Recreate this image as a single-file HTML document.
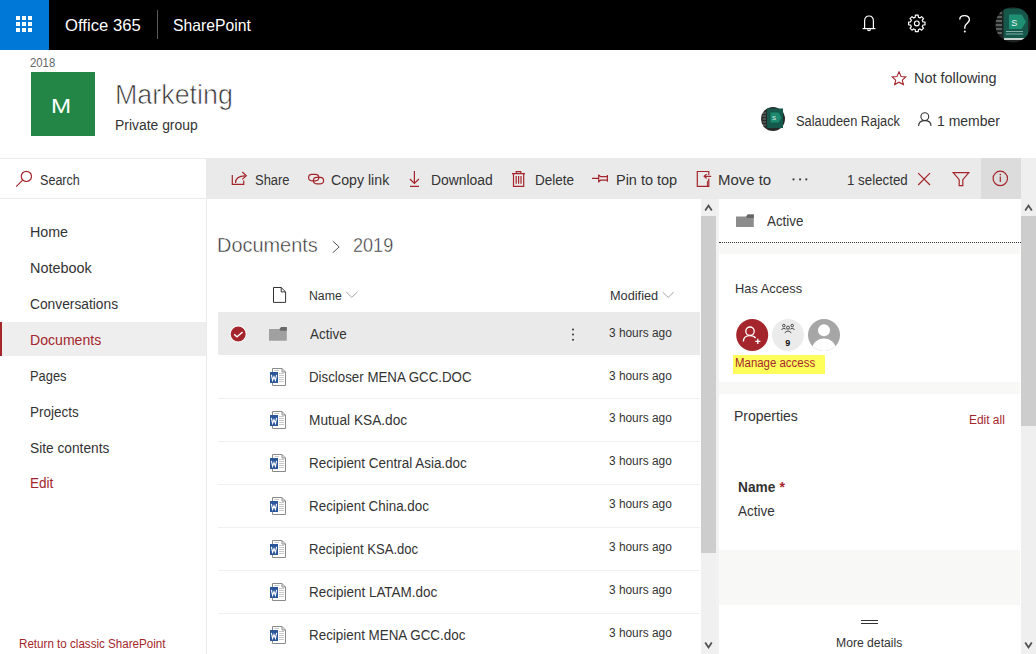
<!DOCTYPE html>
<html><head><meta charset="utf-8">
<style>
*{margin:0;padding:0;box-sizing:border-box}
html,body{width:1036px;height:654px;overflow:hidden;background:#fff;font-family:"Liberation Sans",sans-serif;color:#333}
.a{position:absolute}
.t{position:absolute;line-height:1;white-space:nowrap;transform-origin:0 0}
svg{position:absolute;overflow:visible}
.ln{position:absolute;height:1px;background:#f0f0f0}
</style></head><body>

<!-- Suite bar -->
<div class="a" style="left:0;top:0;width:1036px;height:50px;background:#000"></div>
<div class="a" style="left:0;top:0;width:49px;height:50px;background:#0078d7"></div>
<svg style="left:0;top:0" width="49" height="50">
 <g fill="#fff">
  <rect x="16" y="16" width="4" height="4"/><rect x="22" y="16" width="4" height="4"/><rect x="28" y="16" width="4" height="4"/>
  <rect x="16" y="22" width="4" height="4"/><rect x="22" y="22" width="4" height="4"/><rect x="28" y="22" width="4" height="4"/>
  <rect x="16" y="28" width="4" height="4"/><rect x="22" y="28" width="4" height="4"/><rect x="28" y="28" width="4" height="4"/>
 </g>
</svg>
<div class="a" style="left:157px;top:10px;width:1px;height:29px;background:#5a5a5a"></div>

<!-- suite bar icons -->
<svg style="left:0;top:0" width="1036" height="50">
 <g fill="none" stroke="#fff" stroke-width="1.2">
  <!-- bell -->
  <path d="M864.6 28.2 L864.6 21.2 C864.6 17.8 866.6 16 869 16 C871.4 16 873.4 17.8 873.4 21.2 L873.4 28.2"/>
  <path d="M862.6 28.6 L875.4 28.6"/>
  <path d="M867.6 29.2 C867.6 31 870.4 31 870.4 29.2"/>
  <!-- gear -->
  <circle cx="916.8" cy="23.4" r="2.4"/>
  <path d="M914.39 17.58 L915.18 17.31 L915.40 15.22 L918.20 15.22 L918.42 17.31 L919.21 17.58 L919.96 17.95 L921.59 16.62 L923.58 18.61 L922.25 20.24 L922.62 20.99 L922.89 21.78 L924.98 22.00 L924.98 24.80 L922.89 25.02 L922.62 25.81 L922.25 26.56 L923.58 28.19 L921.59 30.18 L919.96 28.85 L919.21 29.22 L918.42 29.49 L918.20 31.58 L915.40 31.58 L915.18 29.49 L914.39 29.22 L913.64 28.85 L912.01 30.18 L910.02 28.19 L911.35 26.56 L910.98 25.81 L910.71 25.02 L908.62 24.80 L908.62 22.00 L910.71 21.78 L910.98 20.99 L911.35 20.24 L910.02 18.61 L912.01 16.62 L913.64 17.95 Z" stroke-linejoin="round"/>
  <!-- ? -->
  <path d="M959.8 19.4 C959.8 16.8 961.8 15.6 964.4 15.6 C967.2 15.6 969.4 17.2 969.4 19.8 C969.4 23 964.8 23.6 964.8 27.2 L964.8 28.8" stroke-width="1.4"/>
 </g>
 <circle cx="964.8" cy="31.5" r="1" fill="#fff"/>
 <!-- avatar -->
 <defs><clipPath id="bigav"><circle cx="1013" cy="24.8" r="17.6"/></clipPath></defs>
 <g clip-path="url(#bigav)">
 <rect x="994" y="6" width="38" height="38" fill="#1e2221"/>
 <rect x="1003.5" y="8.5" width="24.5" height="29.5" fill="#15574b"/>
 <path d="M1009 14.5 L1021.5 14.5 L1026 21.8 L1021.5 29 L1009 29 Z" fill="#1f8f73"/>
 <rect x="1004" y="38" width="23" height="2" fill="#c9d2cf"/>
 <g stroke="#9aa09e" stroke-width="1.2"><path d="M997 13 h5 M996 17 h6 M995.5 21 h6.5 M995.5 25 h6.5 M996 29 h6 M997 33 h5"/></g>
 <path d="M1006 31.5 h17 M1006 34 h17" stroke="#9fc8bc" stroke-width="0.8"/>
 </g>
 <text x="1011.2" y="25.5" font-family="Liberation Sans" font-size="9" fill="#eef6f3">S</text>
</svg>

<!-- Site header icons -->
<svg style="left:0;top:0" width="1036" height="160">
 <path d="M899 71.8 L901.1 76.6 L905.8 77 L902.3 80.2 L903.4 84.6 L899 82.2 L894.6 84.6 L895.7 80.2 L892.2 77 L896.9 76.6 Z" fill="none" stroke="#a4262c" stroke-width="1.1" stroke-linejoin="miter"/>
 <!-- small avatar -->
 <circle cx="773" cy="119" r="12" fill="#262a29"/>
 <rect x="767" y="108.5" width="16" height="19.5" fill="#14594c"/>
 <path d="M770.5 112.5 L778.5 112.5 L781.5 117.5 L778.5 122.5 L770.5 122.5 Z" fill="#1d8a6f"/>
 <text x="772" y="120" font-family="Liberation Sans" font-size="6" fill="#e8f4ef">S</text>
 <g stroke="#8a8f8e" stroke-width="0.8"><path d="M763 113 h3 M762.5 116 h3.5 M762.5 119 h3.5 M762.5 122 h3.5 M763 125 h3"/></g>
 <!-- person -->
 <g fill="none" stroke="#333" stroke-width="1.1">
  <circle cx="924.8" cy="116.6" r="3.9"/>
  <path d="M918.6 126 C918.6 122.5 921.2 120.6 924.8 120.6 C928.4 120.6 931 122.5 931 126"/>
 </g>
</svg>

<!-- Site header blocks -->
<div class="a" style="left:31px;top:72px;width:64px;height:64px;background:#238646"></div>
<div class="a" style="left:0;top:158px;width:1036px;height:1px;background:#eaeaea"></div>

<!-- Left nav -->
<div class="a" style="left:206px;top:158px;width:1px;height:496px;background:#eaeaea"></div>
<div class="a" style="left:0;top:198px;width:206px;height:1px;background:#eaeaea"></div>
<svg style="left:0;top:0" width="206" height="200">
 <g fill="none" stroke="#a4262c" stroke-width="1.2">
  <circle cx="26.4" cy="176.4" r="5.1"/>
  <path d="M22.6 180.2 L16.2 186.6"/>
 </g>
</svg>
<div class="a" style="left:0;top:322px;width:206px;height:34px;background:#eeeeee"></div>
<div class="a" style="left:0;top:322px;width:2px;height:34px;background:#a4262c"></div>

<!-- Toolbar -->
<div class="a" style="left:207px;top:158px;width:829px;height:41px;background:#eaeaea"></div>
<div class="a" style="left:981px;top:158px;width:40px;height:41px;background:#dcdcdc"></div>
<svg style="left:0;top:0" width="1036" height="200">
 <g fill="none" stroke="#a4262c" stroke-width="1.2">
  <!-- share -->
  <path d="M232.3 175 L232.3 184.4 L243.7 184.4 L243.7 180.5"/>
  <path d="M235.5 183 C235.5 178.5 238.5 175.8 245 175.8"/>
  <path d="M242.3 172 L246.3 175.8 L242.3 179.4"/>
  <!-- copy link -->
  <rect x="308.6" y="174.4" width="10.2" height="6.4" rx="3.2"/>
  <rect x="313.4" y="177.4" width="10.2" height="6.4" rx="3.2"/>
  <!-- download -->
  <path d="M414.4 171 L414.4 183.5 M409.9 179 L414.4 183.5 L418.9 179 M410 186.4 L419 186.4"/>
  <!-- trash -->
  <path d="M512 173.6 L525 173.6 M516.2 173.6 L516.2 171.6 L520.8 171.6 L520.8 173.6 M513.5 173.6 L513.5 186.4 L523.7 186.4 L523.7 173.6 M516.2 176 L516.2 183.8 M518.6 176 L518.6 183.8 M521 176 L521 183.8"/>
  <!-- pin -->
  <path d="M592 178.4 L598.7 178.4 M598.7 174.4 L598.7 182.4 M598.7 175 L600.6 176.6 L607.4 176.6 M598.7 181.8 L600.6 180.2 L607.4 180.2 M607.4 174.9 L607.4 181.8"/>
  <!-- move to -->
  <path d="M708.8 175 L708.8 171.5 L697.3 171.5 L697.3 186.4 L708.8 186.4 L708.8 178.6"/>
  <path d="M711.2 176.3 L704.4 176.3 M706.6 174.1 L704.2 176.3 L706.6 178.5"/>
  <path d="M707.4 186.4 L707.4 181.2 L708.8 179.8" stroke-width="1"/>
  <!-- X -->
  <path d="M918.2 173.2 L930 185 M930 173.2 L918.2 185"/>
  <!-- filter -->
  <path d="M953.2 172.6 L968.8 172.6 L962.8 179.6 L962.8 185.6 L959.2 185.6 L959.2 179.6 Z" stroke-linejoin="miter"/>
  <!-- info -->
  <circle cx="1000.3" cy="178.4" r="7.2"/>
  <path d="M1000.3 176.6 L1000.3 182"/>
 </g>
 <circle cx="1000.3" cy="174.6" r="0.8" fill="#a4262c"/>
 <g fill="#444"><circle cx="793.5" cy="179.4" r="1.1"/><circle cx="800.1" cy="179.4" r="1.1"/><circle cx="806.3" cy="179.4" r="1.1"/></g>
</svg>

<!-- Content -->
<svg style="left:0;top:0" width="700" height="654">
 <path d="M332.8 241.2 L339.2 246.9 L332.8 252.7" fill="none" stroke="#555" stroke-width="1"/>
 <!-- header file icon -->
 <path d="M273.5 287.5 L281.2 287.5 L285.6 291.9 L285.6 302.4 L273.5 302.4 Z M281.2 287.5 L281.2 291.9 L285.6 291.9" fill="none" stroke="#333" stroke-width="1"/>
 <path d="M346.2 292 L351.8 297.4 L357.4 292" fill="none" stroke="#a6a6a6" stroke-width="1"/>
 <path d="M662.6 292 L668.2 297.4 L673.8 292" fill="none" stroke="#a6a6a6" stroke-width="1"/>
</svg>

<div class="a" style="left:218px;top:312px;width:482px;height:43px;background:#eaeaea"></div>
<div class="ln" style="left:218px;top:398px;width:482px"></div>
<div class="ln" style="left:218px;top:441px;width:482px"></div>
<div class="ln" style="left:218px;top:484px;width:482px"></div>
<div class="ln" style="left:218px;top:527px;width:482px"></div>
<div class="ln" style="left:218px;top:570px;width:482px"></div>
<div class="ln" style="left:218px;top:613px;width:482px"></div>

<svg style="left:0;top:0" width="700" height="654">
 <defs>
  <g id="wd">
   <path d="M2.5 0.5 L12 0.5 L15.5 4 L15.5 17.5 L2.5 17.5 Z" fill="#fff" stroke="#8a8a8a" stroke-width="1"/>
   <path d="M12 0.5 L12 4 L15.5 4" fill="none" stroke="#8a8a8a" stroke-width="1"/>
   <g stroke="#c8c8c8" stroke-width="1"><path d="M4.5 2.5 H9 M9 5.5 H14 M9 7.5 H14 M9 9.5 H14 M9 11.5 H14 M9 13.5 H14"/></g>
   <rect x="0" y="4" width="8" height="11" fill="#2b579a"/>
   <path d="M1.4 6.8 L2.6 12.4 L4 8.6 L5.4 12.4 L6.6 6.8" fill="none" stroke="#fff" stroke-width="1.1"/>
  </g>
 </defs>
 <!-- check -->
 <circle cx="238.2" cy="334" r="8.4" fill="#fff"/>
 <circle cx="238.2" cy="334" r="7.5" fill="#a4262c"/>
 <path d="M234.2 334.4 L237 336.8 L242.6 332" fill="none" stroke="#fff" stroke-width="1.4"/>
 <!-- folder -->
 <path d="M269 329 L279.5 329 L281 327 L286.8 327 L286.8 340.8 L269 340.8 Z" fill="#a0a0a0"/>
 <path d="M279.5 329.2 L281.2 327 L286.8 327 L286.8 330.8 L280.5 330.8 Z" fill="#6a6a6a"/>
 <!-- kebab -->
 <g fill="#333"><circle cx="573" cy="329.5" r="1"/><circle cx="573" cy="334.6" r="1"/><circle cx="573" cy="339.7" r="1"/></g>
 <use href="#wd" x="270" y="368"/>
 <use href="#wd" x="270" y="411"/>
 <use href="#wd" x="270" y="454"/>
 <use href="#wd" x="270" y="497"/>
 <use href="#wd" x="270" y="540"/>
 <use href="#wd" x="270" y="583"/>
 <use href="#wd" x="270" y="626"/>
</svg>

<!-- Left scrollbar -->
<div class="a" style="left:701px;top:199px;width:16px;height:455px;background:#f0f0f0"></div>
<div class="a" style="left:701px;top:216px;width:15px;height:337px;background:#cdcdcd"></div>
<div class="a" style="left:716px;top:199px;width:3px;height:455px;background:#f2f2f2"></div>
<svg style="left:0;top:0" width="1036" height="654">
 <g fill="none" stroke="#505050" stroke-width="1.8">
  <path d="M705.2 210.4 L708.5 205.6 L711.8 210.4"/>
  <path d="M705.2 642.6 L708.5 647.4 L711.8 642.6"/>
  <path d="M1025.2 210.4 L1028.5 205.6 L1031.8 210.4"/>
  <path d="M1025.2 642.6 L1028.5 647.4 L1031.8 642.6"/>
 </g>
</svg>

<!-- Panel -->
<svg style="left:0;top:0" width="1036" height="654">
 <path d="M736 216.6 L746 216.6 L747.5 214.6 L753.8 214.6 L753.8 227 L736 227 Z" fill="#8c8c8c"/>
 <path d="M746.2 216.8 L747.8 214.6 L753.8 214.6 L753.8 218 L747 218 Z" fill="#666"/>
</svg>
<div class="a" style="left:719px;top:242px;width:302px;height:1px;border-top:1px dotted #333"></div>
<div class="a" style="left:719px;top:243px;width:301px;height:11px;background:#f8f8f6"></div>

<svg style="left:0;top:0" width="1036" height="654">
 <defs><clipPath id="av"><circle cx="824" cy="335" r="16"/></clipPath></defs>
 <circle cx="752.2" cy="335" r="16" fill="#a4262c"/>
 <g fill="none" stroke="#fff" stroke-width="1.3">
  <circle cx="750" cy="331.2" r="4.2"/>
  <path d="M743.4 341.6 C743.4 337.6 746.4 335.6 750 335.6 C752.5 335.6 754.5 336.5 755.6 338"/>
  <path d="M757.8 338.8 L757.8 344 M755.2 341.4 L760.4 341.4"/>
 </g>
 <circle cx="788" cy="335" r="16" fill="#ebebeb"/>
 <g fill="none" stroke="#333" stroke-width="0.9">
  <circle cx="783.8" cy="325.6" r="1.3"/><circle cx="792.2" cy="325.6" r="1.3"/><circle cx="788" cy="327.6" r="1.5"/>
  <path d="M781.6 330 C782 328 785.6 328 786 329.6 M794.4 330 C794 328 790.4 328 790 329.6 M785 333.2 C785.3 330.4 790.7 330.4 791 333.2"/>
 </g>
 <text x="785.2" y="346" font-family="Liberation Sans" font-size="9" font-weight="bold" fill="#111">9</text>
 <circle cx="824" cy="335" r="16" fill="#a6a6a6"/>
 <g clip-path="url(#av)" fill="#fff">
  <circle cx="824" cy="330.2" r="6"/>
  <ellipse cx="824" cy="350" rx="12" ry="11.5"/>
 </g>
</svg>
<div class="a" style="left:733px;top:355px;width:92px;height:19px;background:#ffff5c"></div>
<div class="a" style="left:719px;top:382px;width:301px;height:12px;background:#f8f8f6"></div>
<div class="a" style="left:719px;top:550px;width:301px;height:55px;background:#f8f8f6"></div>
<div class="a" style="left:861px;top:620px;width:17px;height:1px;background:#333"></div>
<div class="a" style="left:861px;top:623px;width:17px;height:1px;background:#333"></div>

<!-- Right scrollbar -->
<div class="a" style="left:1021px;top:158px;width:15px;height:496px;background:#efefef"></div>
<div class="a" style="left:1021px;top:216px;width:15px;height:210px;background:#cdcdcd"></div>
<svg style="left:0;top:0" width="1036" height="654">
 <g fill="none" stroke="#505050" stroke-width="1.8">
  <path d="M1025.2 210.4 L1028.5 205.6 L1031.8 210.4"/>
  <path d="M1025.2 642.6 L1028.5 647.4 L1031.8 642.6"/>
 </g>
</svg>

<div class="t" style="left:65.29px;top:17.00px;font-size:16.5px;color:#ffffff;transform:scaleX(1.011)">Office 365</div>
<div class="t" style="left:172.85px;top:17.00px;font-size:16.5px;color:#ffffff;transform:scaleX(0.953)">SharePoint</div>
<div class="t" style="left:30.09px;top:57.00px;font-size:12.5px;color:#666666;transform:scaleX(0.908)">2018</div>
<div class="t" style="left:51.00px;top:95.00px;font-size:21px;color:#ffffff;transform:scaleX(1.150)">M</div>
<div class="t" style="left:114.98px;top:81.00px;font-size:28px;color:#333333;-webkit-text-stroke:0.7px #fff;transform:scaleX(0.959)">Marketing</div>
<div class="t" style="left:115.01px;top:118.00px;font-size:14px;color:#333333;transform:scaleX(0.993)">Private group</div>
<div class="t" style="left:913.77px;top:71.00px;font-size:14px;color:#333333;transform:scaleX(1.031)">Not following</div>
<div class="t" style="left:796.48px;top:113.50px;font-size:14px;color:#333333;transform:scaleX(0.915)">Salaudeen Rajack</div>
<div class="t" style="left:937.00px;top:113.50px;font-size:14px;color:#333333">1 member</div>
<div class="t" style="left:39.60px;top:173.00px;font-size:14px;color:#333333;transform:scaleX(0.898)">Search</div>
<div class="t" style="left:30.18px;top:225.00px;font-size:14px;color:#333333;transform:scaleX(1.019)">Home</div>
<div class="t" style="left:29.97px;top:261.00px;font-size:14px;color:#333333;transform:scaleX(1.029)">Notebook</div>
<div class="t" style="left:30.02px;top:297.00px;font-size:14px;color:#333333;transform:scaleX(0.984)">Conversations</div>
<div class="t" style="left:29.99px;top:333.30px;font-size:14px;color:#a4262c;transform:scaleX(1.006)">Documents</div>
<div class="t" style="left:30.08px;top:369.00px;font-size:14px;color:#333333;transform:scaleX(0.921)">Pages</div>
<div class="t" style="left:30.04px;top:404.70px;font-size:14px;color:#333333;transform:scaleX(0.963)">Projects</div>
<div class="t" style="left:30.02px;top:440.60px;font-size:14px;color:#333333;transform:scaleX(0.980)">Site contents</div>
<div class="t" style="left:30.03px;top:476.30px;font-size:14px;color:#a4262c;transform:scaleX(0.965)">Edit</div>
<div class="t" style="left:18.53px;top:638.00px;font-size:12px;color:#a4262c;transform:scaleX(0.968)">Return to classic SharePoint</div>
<div class="t" style="left:255.38px;top:173.00px;font-size:14px;color:#333333;transform:scaleX(0.925)">Share</div>
<div class="t" style="left:330.99px;top:173.00px;font-size:14px;color:#333333;transform:scaleX(1.011)">Copy link</div>
<div class="t" style="left:430.91px;top:173.00px;font-size:14px;color:#333333;transform:scaleX(0.992)">Download</div>
<div class="t" style="left:535.03px;top:173.00px;font-size:14px;color:#333333;transform:scaleX(0.967)">Delete</div>
<div class="t" style="left:615.57px;top:173.00px;font-size:14px;color:#333333;transform:scaleX(1.033)">Pin to top</div>
<div class="t" style="left:718.23px;top:173.00px;font-size:14px;color:#333333;transform:scaleX(1.067)">Move to</div>
<div class="t" style="left:847.05px;top:173.00px;font-size:14px;color:#333333;transform:scaleX(0.952)">1 selected</div>
<div class="t" style="left:216.90px;top:234.00px;font-size:21px;color:#333333;-webkit-text-stroke:0.45px #fff;transform:scaleX(0.949)">Documents</div>
<div class="t" style="left:353.44px;top:234.00px;font-size:21px;color:#333333;-webkit-text-stroke:0.45px #fff;transform:scaleX(0.860)">2019</div>
<div class="t" style="left:309.28px;top:290.20px;font-size:12px;color:#333333;transform:scaleX(1.023)">Name</div>
<div class="t" style="left:609.54px;top:289.80px;font-size:12px;color:#333333;transform:scaleX(1.061)">Modified</div>
<div class="t" style="left:767.30px;top:213.80px;font-size:14px;color:#333333;transform:scaleX(0.953)">Active</div>
<div class="t" style="left:735.05px;top:281.90px;font-size:13.5px;color:#333333;transform:scaleX(0.951)">Has Access</div>
<div class="t" style="left:734.75px;top:356.70px;font-size:12px;color:#a4262c;transform:scaleX(0.953)">Manage access</div>
<div class="t" style="left:734.00px;top:409.00px;font-size:14px;color:#333333">Properties</div>
<div class="t" style="left:968.51px;top:414.10px;font-size:12px;color:#a4262c;transform:scaleX(0.994)">Edit all</div>
<div class="t" style="left:737.62px;top:479.80px;font-size:14px;color:#333333;font-weight:700;transform:scaleX(0.978)">Name</div>
<div class="t" style="left:779.40px;top:479.80px;font-size:14px;color:#a4262c;font-weight:700">*</div>
<div class="t" style="left:738.10px;top:503.80px;font-size:14px;color:#333333;transform:scaleX(0.961)">Active</div>
<div class="t" style="left:836.29px;top:636.70px;font-size:12px;color:#333333;transform:scaleX(1.014)">More details</div>
<div class="t" style="left:310.30px;top:327.40px;font-size:14px;color:#333333;transform:scaleX(0.961)">Active</div>
<div class="t" style="left:609.01px;top:326.60px;font-size:12px;color:#333333;transform:scaleX(0.990)">3 hours ago</div>
<div class="t" style="left:309.35px;top:370.30px;font-size:14px;color:#333333;transform:scaleX(0.950)">Discloser MENA GCC.DOC</div>
<div class="t" style="left:609.01px;top:369.50px;font-size:12px;color:#333333;transform:scaleX(0.990)">3 hours ago</div>
<div class="t" style="left:309.32px;top:413.20px;font-size:14px;color:#333333;transform:scaleX(0.978)">Mutual KSA.doc</div>
<div class="t" style="left:609.01px;top:412.40px;font-size:12px;color:#333333;transform:scaleX(0.990)">3 hours ago</div>
<div class="t" style="left:309.34px;top:456.10px;font-size:14px;color:#333333;transform:scaleX(0.961)">Recipient Central Asia.doc</div>
<div class="t" style="left:609.01px;top:455.30px;font-size:12px;color:#333333;transform:scaleX(0.990)">3 hours ago</div>
<div class="t" style="left:309.34px;top:499.00px;font-size:14px;color:#333333;transform:scaleX(0.957)">Recipient China.doc</div>
<div class="t" style="left:609.01px;top:498.20px;font-size:12px;color:#333333;transform:scaleX(0.990)">3 hours ago</div>
<div class="t" style="left:309.37px;top:541.90px;font-size:14px;color:#333333;transform:scaleX(0.935)">Recipient KSA.doc</div>
<div class="t" style="left:609.01px;top:541.10px;font-size:12px;color:#333333;transform:scaleX(0.990)">3 hours ago</div>
<div class="t" style="left:309.34px;top:584.80px;font-size:14px;color:#333333;transform:scaleX(0.962)">Recipient LATAM.doc</div>
<div class="t" style="left:609.01px;top:584.00px;font-size:12px;color:#333333;transform:scaleX(0.990)">3 hours ago</div>
<div class="t" style="left:309.34px;top:627.70px;font-size:14px;color:#333333;transform:scaleX(0.957)">Recipient MENA GCC.doc</div>
<div class="t" style="left:609.01px;top:626.90px;font-size:12px;color:#333333;transform:scaleX(0.990)">3 hours ago</div>

</body></html>
